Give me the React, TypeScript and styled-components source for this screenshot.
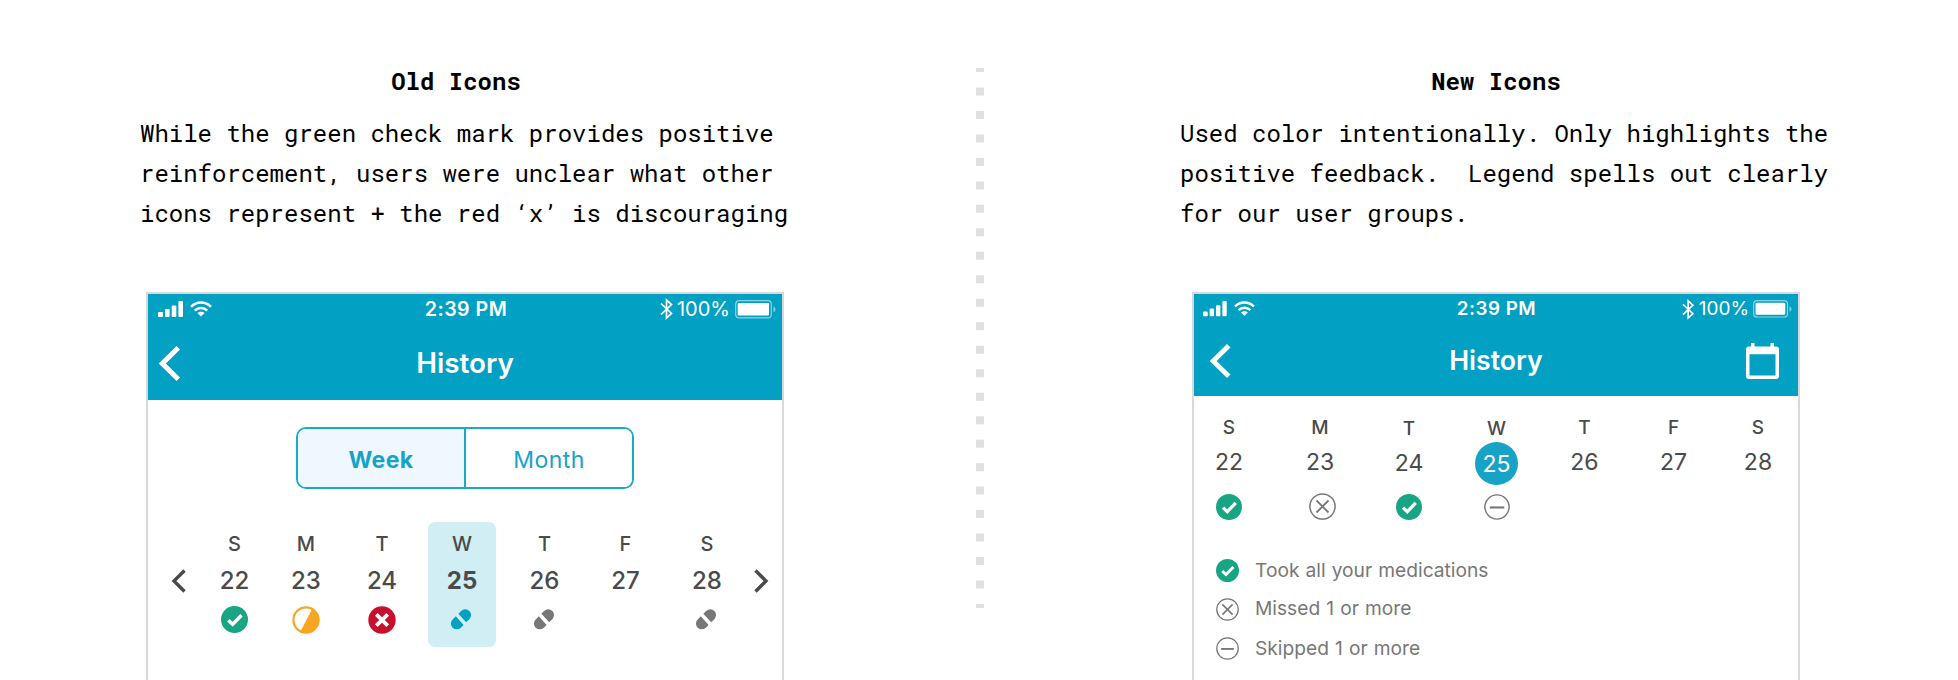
import React from "react";
import styled, { createGlobalStyle } from "styled-components";

const TEAL = "#02a0c3";
const GREEN = "#17a583";
const MONO = '"Roboto Mono", "Liberation Mono", monospace';

const GlobalStyle = createGlobalStyle`
  * { box-sizing: border-box; }
  body {
    margin: 0;
    background: #fff;
    font-family: Inter, "Liberation Sans", sans-serif;
  }
  svg { display: block; flex: none; overflow: visible; }
`;

const Page = styled.main`
  display: flex;
  width: 1958px;
  height: 680px;
  overflow: hidden;
  background: #fff;
`;

const Column = styled.section<{ $left: number; $width: number }>`
  flex: none;
  width: ${(p) => p.$width}px;
  padding: 61px 0 0 ${(p) => p.$left}px;
`;

const Heading = styled.h2`
  width: 632px;
  margin: 0;
  font: 700 24px/40px ${MONO};
  text-align: center;
  color: #000;
`;

const Copy = styled.p`
  height: 120px;
  margin: 12px 0 59px;
  font: 400 24px/40px ${MONO};
  white-space: pre;
  color: #000;
`;

const Divider = styled.div`
  flex: none;
  width: 8px;
  padding-top: 68px;
`;

const Phone = styled.article<{ $width: number; $offset: number }>`
  width: ${(p) => p.$width}px;
  height: 420px;
  margin-left: ${(p) => p.$offset}px;
  border: 2px solid #d9d9d9;
  background: #fff;
`;

const Header = styled.header<{ $height: number }>`
  height: ${(p) => p.$height}px;
  background: ${TEAL};
  color: #fff;
`;

const StatusBar = styled.div<{ $pad: string }>`
  display: grid;
  grid-template-columns: 1fr auto 1fr;
  align-items: center;
  height: 30px;
  padding: ${(p) => p.$pad};
`;

const StatusLeft = styled.div<{ $gap: number }>`
  display: flex;
  gap: ${(p) => p.$gap}px;
`;

const StatusRight = styled.div`
  display: flex;
  align-items: center;
  justify-content: flex-end;
`;

const Time = styled.span<{ $size: number }>`
  padding-right: 3px;
  font-size: ${(p) => p.$size}px;
  font-weight: 600;
  letter-spacing: 0.5px;
  line-height: 30px;
`;

const Percent = styled.span<{ $size: number; $gap: number }>`
  margin: 0 ${(p) => p.$gap}px 0 4px;
  font-size: ${(p) => p.$size}px;
  line-height: 30px;
`;

const NavBar = styled.div<{ $pad: string; $height: number }>`
  display: grid;
  grid-template-columns: 1fr auto 1fr;
  align-items: center;
  height: ${(p) => p.$height}px;
  padding: ${(p) => p.$pad};
`;

const BackButton = styled.div<{ $shift: number }>`
  margin-left: ${(p) => p.$shift}px;
`;

const Title = styled.h1<{ $size: number }>`
  margin: 0;
  padding-bottom: 2px;
  font-size: ${(p) => p.$size}px;
  font-weight: 600;
  line-height: 36px;
`;

const NavEnd = styled.div`
  display: flex;
  justify-content: flex-end;
`;

const Segments = styled.div`
  display: flex;
  width: 338px;
  height: 62px;
  margin: 27px 0 32.7px 148px;
  border: 2px solid #1ba9c9;
  border-radius: 10px;
  overflow: hidden;
`;

const Segment = styled.button<{ $active?: boolean }>`
  flex: ${(p) => (p.$active ? "0 0 168px" : "1")};
  padding: 2px 0 0;
  border: 0;
  border-right: ${(p) => (p.$active ? "2px solid #1ba9c9" : "0")};
  background: ${(p) => (p.$active ? "#eff8fe" : "#fff")};
  color: #16a3c5;
  font: ${(p) => (p.$active ? 700 : 400)} 23px/58px Inter, sans-serif;
  letter-spacing: 0.4px;
`;

const WeekRow = styled.div<{ $pad: string }>`
  display: flex;
  align-items: flex-start;
  padding: ${(p) => p.$pad};
`;

const Arrow = styled.div<{ $margin: string }>`
  margin: ${(p) => p.$margin};
`;

const Day = styled.div<{ $gap: number; $selected?: boolean }>`
  flex: none;
  width: 68px;
  height: 125px;
  margin-left: ${(p) => p.$gap}px;
  padding-top: 10px;
  border-radius: 7px;
  background: ${(p) => (p.$selected ? "#d0eef4" : "transparent")};
  display: flex;
  flex-direction: column;
  align-items: center;
  color: #4a4a4a;
`;

const DayName = styled.span<{ $size: number }>`
  height: 24px;
  font-size: ${(p) => p.$size}px;
  font-weight: 500;
  line-height: 24px;
`;

const DayNumber = styled.span<{ $bold?: boolean }>`
  margin: 12px 0 12px;
  font-size: 24px;
  font-weight: ${(p) => (p.$bold ? 700 : 500)};
  line-height: 26px;
`;

const Slot = styled.div`
  display: flex;
  align-items: center;
  justify-content: center;
  height: 28px;
`;

const NewDay = styled.div<{ $gap: number; $drop?: number }>`
  flex: none;
  width: 44px;
  margin-left: ${(p) => p.$gap}px;
  padding-top: ${(p) => p.$drop ?? 0}px;
  display: flex;
  flex-direction: column;
  align-items: center;
  color: #4a4a4a;
`;

const NewDate = styled.span<{ $selected?: boolean }>`
  width: 43px;
  height: 43px;
  margin-top: ${(p) => (p.$selected ? 0.5 : 1)}px;
  margin-bottom: ${(p) => (p.$selected ? 0.5 : 0)}px;
  border-radius: 50%;
  background: ${(p) => (p.$selected ? "#16a3c6" : "transparent")};
  color: ${(p) => (p.$selected ? "#fff" : "#4a4a4a")};
  font-size: 23px;
  line-height: ${(p) => (p.$selected ? 44 : 43)}px;
  text-align: center;
`;

const NewMark = styled.div<{ $top: number; $shift?: number }>`
  margin: ${(p) => p.$top}px 0 0 ${(p) => p.$shift ?? 0}px;
`;

const Legend = styled.ul`
  margin: 0;
  padding: 31px 0 0 22px;
  list-style: none;
`;

const LegendItem = styled.li`
  display: flex;
  align-items: center;
  height: 39px;
`;

const LegendText = styled.span<{ $shift: number }>`
  margin-left: 16px;
  padding-bottom: ${(p) => p.$shift}px;
  font-size: 19.2px;
  line-height: 26px;
  word-spacing: 0.7px;
  color: #777;
`;

const Signal = ({ scale = 1 }: { scale?: number }) => (
  <svg width={26 * scale} height={16 * scale} viewBox="0 0 26 16" fill="#fff">
    <rect x="0" y="11" width="5" height="5" rx="1" />
    <rect x="7" y="8" width="4.6" height="8" rx="1" />
    <rect x="13.7" y="4.5" width="4.6" height="11.5" rx="1" />
    <rect x="20.4" y="0" width="4.6" height="16" rx="1" />
  </svg>
);

const Wifi = ({ scale = 1 }: { scale?: number }) => (
  <svg width={22 * scale} height={16 * scale} viewBox="0 0 22 16" fill="none" stroke="#fff" strokeWidth="2.5">
    <path d="M1 5.8C6.5.2 15.5.2 21 5.8" />
    <path d="M4.8 9.7c3.5-3.5 8.9-3.5 12.4 0" />
    <path d="M11 15.6 7.4 12.1C9.4 10.2 12.6 10.2 14.6 12.1Z" fill="#fff" stroke="none" />
  </svg>
);

const Bluetooth = ({ scale = 1 }: { scale?: number }) => (
  <svg width={13 * scale} height={22 * scale} viewBox="0 0 13 22" fill="none" stroke="#fff" strokeWidth="1.7">
    <path d="M1 5.5 11.5 15.5 6.5 20V2L11.5 6.5 1 16.5" />
  </svg>
);

const Battery = ({ scale = 1 }: { scale?: number }) => (
  <svg width={42 * scale} height={19 * scale} viewBox="0 0 42 19">
    <rect x="0.7" y="0.7" width="35.6" height="17.2" rx="3.5" fill="none" stroke="#fff" strokeOpacity=".55" strokeWidth="1.2" />
    <rect x="2.7" y="3" width="31.3" height="12.5" rx="1" fill="#fff" />
    <path d="M38.5 6.5c2.6 1 2.6 4.8 0 5.8z" fill="#fff" fillOpacity=".55" />
  </svg>
);

const BackChevron = ({ height }: { height: number }) => (
  <svg width={(height * 21) / 35} height={height} viewBox="0 0 21 35" fill="none" stroke="#fff" strokeWidth="5">
    <path d="M19.3 1.7 3.3 17.5 19.3 33.3" />
  </svg>
);

const WeekChevron = ({ flip }: { flip?: boolean }) => (
  <svg width="15" height="24" viewBox="0 0 15 24" fill="none" stroke="#4a4a4a" strokeWidth="3.4">
    <path d={flip ? "M1.5 1.5 12 12 1.5 22.5" : "M13.5 1.5 3 12 13.5 22.5"} />
  </svg>
);

const CalendarIcon = () => (
  <svg width="33" height="36" viewBox="0 0 33 36">
    <path
      fill="#fff"
      fillRule="evenodd"
      d="M5 0h3.5v3.5h16V0H28v3.5h2a3 3 0 0 1 3 3V33a3 3 0 0 1-3 3H3a3 3 0 0 1-3-3V6.5a3 3 0 0 1 3-3h2zM3.5 11.3v21.2h26V11.3z"
    />
  </svg>
);

const CheckMark = ({ size }: { size: number }) => (
  <svg width={size} height={size} viewBox="0 0 27 27">
    <circle cx="13.5" cy="13.5" r="13.5" fill={GREEN} />
    <path d="M7.3 14.2 11.7 18.3 20.5 9.3" fill="none" stroke="#fff" strokeWidth="3.4" />
  </svg>
);

const HalfMark = () => (
  <svg width="28" height="28" viewBox="0 0 28 28">
    <circle cx="14" cy="14" r="12.6" fill="#fff" stroke="#f6a623" strokeWidth="2.2" />
    <path d="M20.5 2.2A13.6 13.6 0 0 1 8 26.2z" fill="#f6a623" />
  </svg>
);

const RedCross = () => (
  <svg width="28" height="28" viewBox="0 0 28 28">
    <circle cx="14" cy="14" r="13.7" fill="#c8102e" />
    <path d="m8.3 8.3 11.4 11.4M19.7 8.3 8.3 19.7" stroke="#fff" strokeWidth="3.8" />
  </svg>
);

const Pill = ({ color }: { color: string }) => (
  <svg width="24" height="22" viewBox="0 0 24 22" fill={color}>
    <g transform="translate(0 -.7) rotate(-45 11 11)">
      <path d="M9.5 5.2 8.9 16.8H5a5.8 5.8 0 0 1 0-11.6zM13.1 5.2l-.6 11.6H17a5.8 5.8 0 0 0 0-11.6z" />
    </g>
  </svg>
);

const OutlineMark = ({ size, kind }: { size: number; kind: "cross" | "minus" }) => (
  <svg width={size} height={size} viewBox="0 0 27 27" fill="none" stroke="#777" strokeWidth="1.5">
    <circle cx="13.5" cy="13.5" r="12.6" />
    {kind === "cross" ? (
      <path d="m7.5 7.5 12 12M19.5 7.5l-12 12" strokeWidth="1.8" />
    ) : (
      <path d="M6 14h15" strokeWidth="2.2" />
    )}
  </svg>
);

const DottedLine = () => (
  <svg width="8" height="540" viewBox="0 0 8 540">
    <line x1="4" y1="0" x2="4" y2="540" stroke="#e0e0e0" strokeWidth="8" strokeDasharray="8 15.478" strokeDashoffset="4" />
  </svg>
);

const oldDays = [
  { name: "S", date: 22, gap: 14.5, mark: <CheckMark size={27} /> },
  { name: "M", date: 23, gap: 3.5, mark: <HalfMark /> },
  { name: "T", date: 24, gap: 8, mark: <RedCross /> },
  { name: "W", date: 25, gap: 12, mark: <Pill color={TEAL} />, selected: true },
  { name: "T", date: 26, gap: 14.5, mark: <Pill color="#777" /> },
  { name: "F", date: 27, gap: 13, mark: null },
  { name: "S", date: 28, gap: 13.5, mark: <Pill color="#777" /> },
];

const newDays = [
  { name: "S", date: 22, gap: 0, mark: <CheckMark size={26} />, top: 10 },
  { name: "M", date: 23, gap: 47, mark: <OutlineMark size={27} kind="cross" />, top: 9, shift: 5 },
  { name: "T", date: 24, gap: 45, drop: 1.5, mark: <CheckMark size={26} />, top: 8.5 },
  { name: "W", date: 25, gap: 43.5, drop: 1.5, mark: <OutlineMark size={26} kind="minus" />, top: 8.5, selected: true },
  { name: "T", date: 26, gap: 44 },
  { name: "F", date: 27, gap: 45 },
  { name: "S", date: 28, gap: 40.5 },
];

const legend = [
  { icon: <CheckMark size={23} />, text: "Took all your medications", shift: 0 },
  { icon: <OutlineMark size={23} kind="cross" />, text: "Missed 1 or more", shift: 3 },
  { icon: <OutlineMark size={23} kind="minus" />, text: "Skipped 1 or more", shift: 1 },
];

export default function App() {
  return (
    <Page>
      <GlobalStyle />
      <Column $left={140} $width={976}>
        <Heading>Old Icons</Heading>
        <Copy>
          {"While the green check mark provides positive\nreinforcement, users were unclear what other\nicons represent + the red ‘x’ is discouraging"}
        </Copy>
        <Phone $width={638} $offset={6}>
          <Header $height={106.3}>
            <StatusBar $pad="0 5px 0 10px">
              <StatusLeft $gap={6}>
                <Signal />
                <Wifi />
              </StatusLeft>
              <Time $size={19.6}>2:39 PM</Time>
              <StatusRight>
                <Bluetooth />
                <Percent $size={20} $gap={5}>100%</Percent>
                <Battery />
              </StatusRight>
            </StatusBar>
            <NavBar $pad="0 11px" $height={79}>
              <BackButton $shift={0}>
                <BackChevron height={35} />
              </BackButton>
              <Title $size={27.8}>History</Title>
              <NavEnd />
            </NavBar>
          </Header>
          <Segments>
            <Segment $active>Week</Segment>
            <Segment>Month</Segment>
          </Segments>
          <WeekRow $pad="0 0 0 23px">
            <Arrow $margin="47px 0 0">
              <WeekChevron />
            </Arrow>
            {oldDays.map((d) => (
              <Day key={d.date} $gap={d.gap} $selected={d.selected}>
                <DayName $size={20}>{d.name}</DayName>
                <DayNumber $bold={d.selected}>{d.date}</DayNumber>
                <Slot>{d.mark}</Slot>
              </Day>
            ))}
            <Arrow $margin="47px 0 0 13px">
              <WeekChevron flip />
            </Arrow>
          </WeekRow>
        </Phone>
      </Column>
      <Divider>
        <DottedLine />
      </Divider>
      <Column $left={196} $width={974}>
        <Heading>New Icons</Heading>
        <Copy>
          {"Used color intentionally. Only highlights the\npositive feedback.  Legend spells out clearly\nfor our user groups."}
        </Copy>
        <Phone $width={608} $offset={12}>
          <Header $height={101.5}>
            <StatusBar $pad="0 5px 0 9px">
              <StatusLeft $gap={6}>
                <Signal scale={0.95} />
                <Wifi scale={0.95} />
              </StatusLeft>
              <Time $size={18.8}>2:39 PM</Time>
              <StatusRight>
                <Bluetooth scale={0.95} />
                <Percent $size={19} $gap={4}>100%</Percent>
                <Battery scale={0.95} />
              </StatusRight>
            </StatusBar>
            <NavBar $pad="0 19px" $height={73}>
              <BackButton $shift={-3}>
                <BackChevron height={34} />
              </BackButton>
              <Title $size={26.7}>History</Title>
              <NavEnd>
                <CalendarIcon />
              </NavEnd>
            </NavBar>
          </Header>
          <WeekRow $pad="20px 0 0 13px">
            {newDays.map((d) => (
              <NewDay key={d.date} $gap={d.gap} $drop={d.drop}>
                <DayName $size={19}>{d.name}</DayName>
                <NewDate $selected={d.selected}>{d.date}</NewDate>
                {d.mark && (
                  <NewMark $top={d.top} $shift={d.shift}>
                    {d.mark}
                  </NewMark>
                )}
              </NewDay>
            ))}
          </WeekRow>
          <Legend>
            {legend.map((l) => (
              <LegendItem key={l.text}>
                {l.icon}
                <LegendText $shift={l.shift}>{l.text}</LegendText>
              </LegendItem>
            ))}
          </Legend>
        </Phone>
      </Column>
    </Page>
  );
}
